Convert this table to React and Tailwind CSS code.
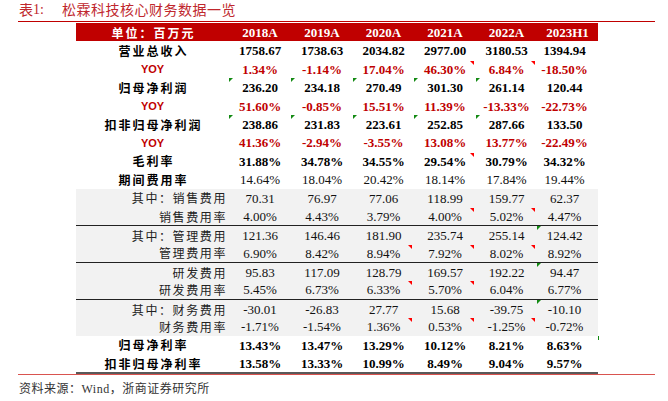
import React from 'react';

const years = ['2018A', '2019A', '2020A', '2021A', '2022A', '2023H1'];

const rows = [
  { label: '营业总收入', kind: 'bold', vals: ['1758.67', '1738.63', '2034.82', '2977.00', '3180.53', '1394.94'] },
  { label: 'YOY', kind: 'yoy', vals: ['1.34%', '-1.14%', '17.04%', '46.30%', '6.84%', '-18.50%'], red: [3, 4] },
  { label: '归母净利润', kind: 'bold', vals: ['236.20', '234.18', '270.49', '301.30', '261.14', '120.44'], green: [0, 1, 2, 3, 4] },
  { label: 'YOY', kind: 'yoy', vals: ['51.60%', '-0.85%', '15.51%', '11.39%', '-13.33%', '-22.73%'] },
  { label: '扣非归母净利润', kind: 'bold', vals: ['238.86', '231.83', '223.61', '252.85', '287.66', '133.50'], green: [0, 1, 2, 3, 4] },
  { label: 'YOY', kind: 'yoy', vals: ['41.36%', '-2.94%', '-3.55%', '13.08%', '13.77%', '-22.49%'] },
  { label: '毛利率', kind: 'bold', vals: ['31.88%', '34.78%', '34.55%', '29.54%', '30.79%', '34.32%'], red: [3] },
  { label: '期间费用率', kind: 'mixed', vals: ['14.64%', '18.04%', '20.42%', '18.14%', '17.84%', '19.44%'] },
  { label: '其中：销售费用', kind: 'sub', vals: ['70.31', '76.97', '77.06', '118.99', '159.77', '62.37'] },
  { label: '销售费用率', kind: 'sub', vals: ['4.00%', '4.43%', '3.79%', '4.00%', '5.02%', '4.47%'], red: [3, 4] },
  { label: '其中：管理费用', kind: 'sub', line: true, vals: ['121.36', '146.46', '181.90', '235.74', '255.14', '124.42'], green: [5] },
  { label: '管理费用率', kind: 'sub', vals: ['6.90%', '8.42%', '8.94%', '7.92%', '8.02%', '8.92%'], red: [2, 3, 4] },
  { label: '研发费用', kind: 'sub', line: true, vals: ['95.83', '117.09', '128.79', '169.57', '192.22', '94.47'], green: [5] },
  { label: '研发费用率', kind: 'sub', vals: ['5.45%', '6.73%', '6.33%', '5.70%', '6.04%', '6.77%'], red: [2, 3] },
  { label: '其中：财务费用', kind: 'sub', line: true, vals: ['-30.01', '-26.83', '27.77', '15.68', '-39.75', '-10.10'], green: [5] },
  { label: '财务费用率', kind: 'sub', vals: ['-1.71%', '-1.54%', '1.36%', '0.53%', '-1.25%', '-0.72%'], red: [2, 3, 4] },
  { label: '归母净利率', kind: 'bold', vals: ['13.43%', '13.47%', '13.29%', '10.12%', '8.21%', '8.63%'], edge: true },
  { label: '扣非归母净利率', kind: 'bold', vals: ['13.58%', '13.33%', '10.99%', '8.49%', '9.04%', '9.57%'] },
];

const cols = 'grid grid-cols-[153px_62px_62px_61px_62px_61px_61px]';

function GreenMark() {
  return (
    <svg className="absolute left-0 top-0" width="4" height="4" viewBox="0 0 4 4">
      <polygon points="0,0 4,0 0,4" fill="#138a13" />
    </svg>
  );
}

function RedMark() {
  return (
    <svg className="absolute right-[2px] top-[1px]" width="4" height="4" viewBox="0 0 4 4">
      <polygon points="0,0 4,0 4,4" fill="#ff0000" />
    </svg>
  );
}

function Label({ row }) {
  if (row.kind === 'yoy') {
    return (
      <div className="flex items-center justify-center font-['Liberation_Sans',sans-serif] font-bold text-[11px] text-[#c00000]">
        YOY
      </div>
    );
  }
  if (row.kind === 'sub') {
    return (
      <div className="flex items-center justify-end pr-[2px] text-[12px] tracking-[1.6px] text-[#222] font-['Noto_Sans_CJK_SC',sans-serif]">
        {row.label}
      </div>
    );
  }
  return (
    <div className="flex items-center justify-center pl-[2px] text-[12px] tracking-[2px] font-bold text-black font-['Noto_Sans_CJK_SC',sans-serif]">
      {row.label}
    </div>
  );
}

export default function App() {
  return (
    <div className="w-[668px] h-[401px] bg-white overflow-hidden font-['Liberation_Serif','Noto_Sans_CJK_SC',serif]">
      <div className="h-[21px] flex items-center pl-[19px] pb-[3px] text-[14px] text-[#c0272d]">
        <span className="font-['Noto_Sans_CJK_SC',sans-serif]">表</span>
        <span>1:</span>
        <span className="ml-[18px] tracking-[0.5px] font-['Noto_Sans_CJK_SC',sans-serif]">松霖科技核心财务数据一览</span>
      </div>
      <div className="ml-[18px] w-[637px] h-px bg-[#c00000]" />
      <div className="ml-[76px] w-[522px] mt-[1px]">
        <div className={`${cols} h-[18.4px] bg-[#c00000] text-white`}>
          <div className="flex items-center justify-center pl-[2px] text-[12px] tracking-[2px] font-bold font-['Noto_Sans_CJK_SC',sans-serif]">
            单位：百万元
          </div>
          {years.map((y) => (
            <div key={y} className="flex items-center justify-center text-[13px] font-bold">
              {y}
            </div>
          ))}
        </div>
        {rows.map((row, i) => {
          const sub = row.kind === 'sub';
          const valCls =
            row.kind === 'yoy'
              ? 'font-bold text-[#c00000]'
              : row.kind === 'bold'
              ? 'font-bold text-black'
              : 'text-[#111]';
          return (
            <div
              key={i}
              className={`${cols} relative h-[18.4px] ${sub ? 'bg-[#f2f2f2]' : ''} ${row.line ? 'border-t border-[#222]' : ''}`}
            >
              <Label row={row} />
              {row.vals.map((v, j) => (
                <div
                  key={j}
                  className={`relative flex items-center justify-center text-[13px] ${valCls} ${j === 5 ? 'pr-[6px]' : ''}`}
                >
                  {row.green && row.green.includes(j) && <GreenMark />}
                  {row.red && row.red.includes(j) && <RedMark />}
                  {v}
                </div>
              ))}
              {row.edge && <div className="absolute left-[522px] top-0 w-px h-[4px] bg-[#138a13]" />}
            </div>
          );
        })}
        <div className="h-[2px] bg-[#595959]" />
      </div>
      <div className="ml-[18px] w-[637px] h-px bg-[#d9534f]" />
      <div className="pl-[19px] mt-[5px] leading-[16px] text-[12px] text-[#333] tracking-[0.5px]">
        <span className="font-['Noto_Sans_CJK_SC',sans-serif]">资料来源：</span>
        <span>Wind</span>
        <span className="font-['Noto_Sans_CJK_SC',sans-serif]">，浙商证券研究所</span>
      </div>
    </div>
  );
}
